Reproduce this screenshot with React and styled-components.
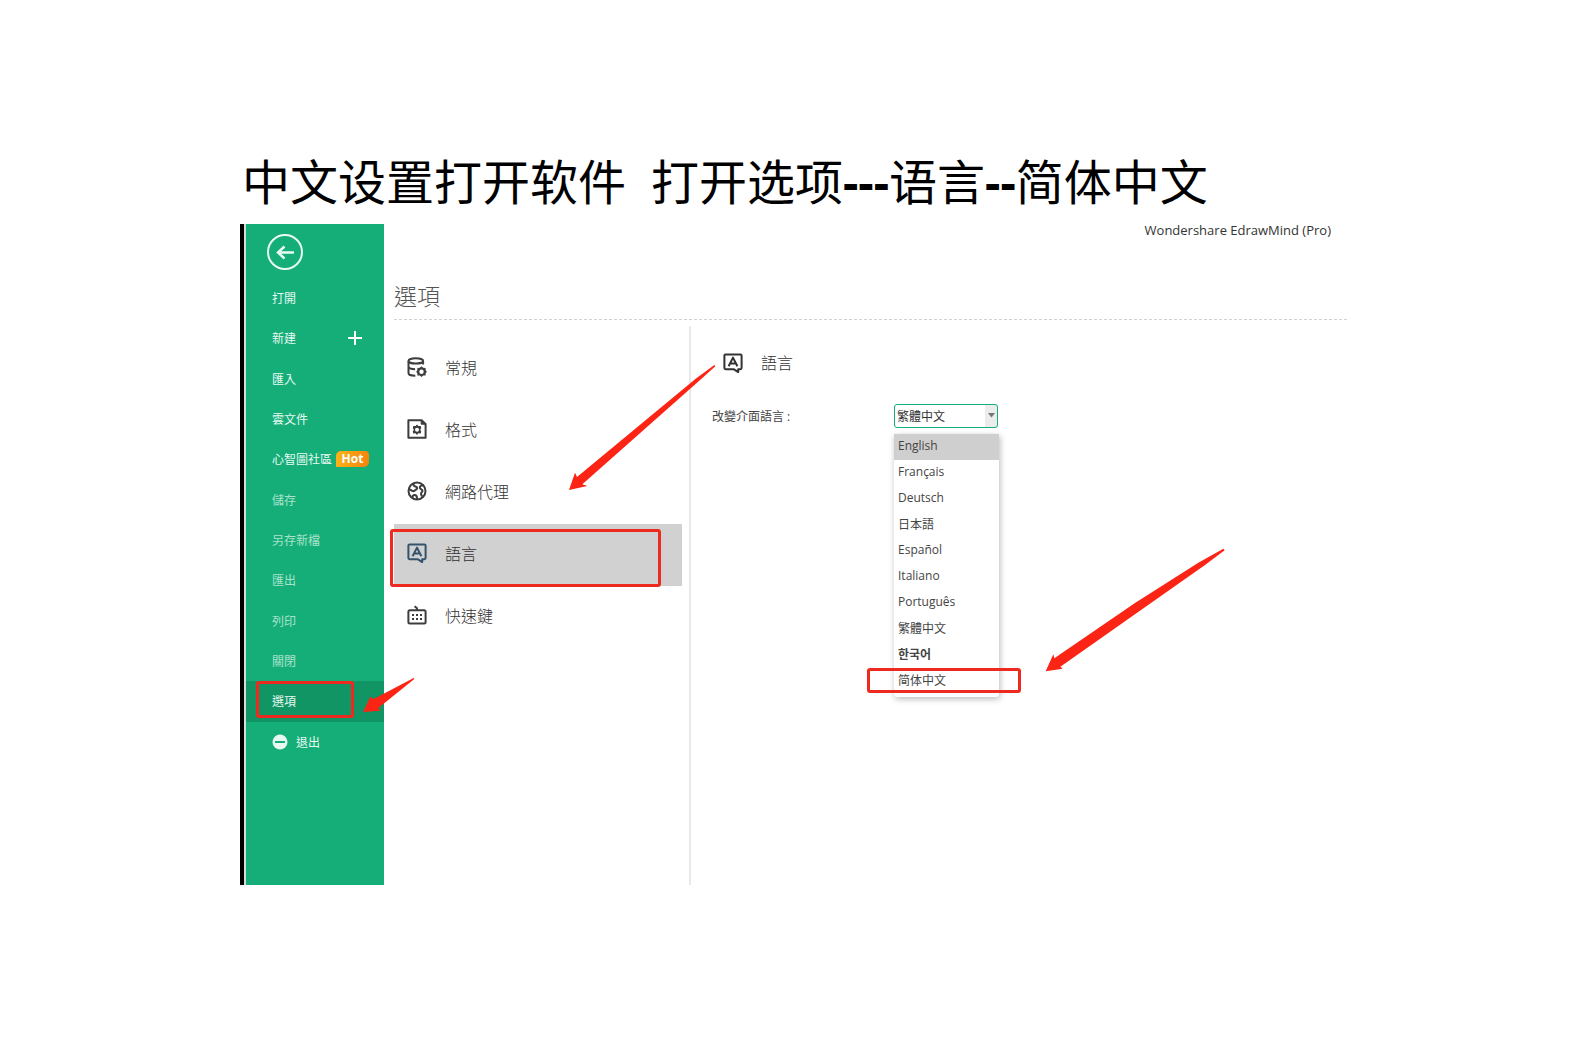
import React, { useState } from "react";
import styled, { createGlobalStyle } from "styled-components";

const GlobalStyle = createGlobalStyle`
  * {
    box-sizing: border-box;
  }
  body {
    margin: 0;
    background: #fff;
    color: #444;
    font-family: "Open Sans", "Noto Sans CJK TC", sans-serif;
    font-size: 12px;
  }
  button {
    font: inherit;
    color: inherit;
    background: none;
    border: none;
    padding: 0;
    text-align: left;
    cursor: pointer;
  }
`;

const Page = styled.main`
  max-width: 1107px;
  margin: 0 auto;
  padding: 150px 0 160px;
`;

const Title = styled.h1`
  margin: 0 0 10px;
  padding-left: 2px;
  color: #000;
  font-family: "Noto Sans", "Noto Sans CJK SC", sans-serif;
  font-size: 48px;
  font-weight: 400;
  line-height: 64px;
  white-space: pre;

  b {
    font-weight: 700;
  }
`;

const Window = styled.section`
  display: flex;
  min-height: 661px;
  border-left: 4px solid #000;
`;

const Sidebar = styled.aside`
  flex: 0 0 140px;
  padding-top: 10px;
  background: #15ae79;
  border-left: 2px solid #d5dcd9;
`;

const BackButton = styled.button`
  display: block;
  width: 36px;
  height: 36px;
  margin: 0 0 8px 21px;

  svg {
    display: block;
  }
`;

const Menu = styled.nav`
  display: flex;
  flex-direction: column;
  height: 484px;
`;

const MenuItem = styled.button`
  flex: 1;
  display: flex;
  align-items: center;
  position: relative;
  padding-left: 26px;
  color: ${(props) => (props.$dim ? "#a9e2cb" : "#e6f8f1")};
  background: ${(props) => (props.$active ? "#129565" : "transparent")};

  .plus {
    margin-left: auto;
    margin-right: 21px;
  }
  .exit {
    margin-right: 8px;
  }
`;

const HotBadge = styled.span`
  width: 33px;
  height: 16px;
  margin-left: 4px;
  border-radius: 5px 4px 5px 1px;
  background: linear-gradient(100deg, #fbb418, #f5820c);
  color: #fff;
  font-weight: 700;
  line-height: 16px;
  text-align: center;
`;

const Content = styled.div`
  flex: 1;
  min-width: 0;
  display: flex;
  flex-direction: column;
  padding-left: 10px;
`;

const AppName = styled.div`
  padding-right: 16px;
  color: #333;
  font-size: 13px;
  line-height: 12px;
  text-align: right;
`;

const Heading = styled.h2`
  margin: 41px 0 0;
  padding-bottom: 4px;
  border-bottom: 1px dashed #d2d2d2;
  color: #555;
  font-size: 23px;
  font-weight: 300;
  line-height: 38px;
`;

const Columns = styled.div`
  flex: 1;
  display: flex;
  padding-top: 6px;
`;

const Categories = styled.div`
  flex: 0 0 297px;
  display: flex;
  flex-direction: column;
  padding: 12px 7px 0 0;
  border-right: 2px solid #e9e9e9;
`;

const Category = styled.button`
  display: flex;
  align-items: center;
  gap: 18px;
  position: relative;
  height: 62px;
  padding: 0 0 5px 13px;
  font-size: 16px;
  font-weight: 300;
  color: #333;
  background: ${(props) => (props.$active ? "#d1d1d1" : "transparent")};

  svg {
    color: ${(props) => (props.$active ? "#34536c" : "#3d3d3d")};
  }
`;

const Detail = styled.div`
  flex: 1;
  position: relative;
  padding: 24px 0 0 21px;
`;

const DetailTitle = styled.h3`
  display: flex;
  align-items: center;
  gap: 18px;
  margin: 0 0 28px;
  padding-left: 11px;
  color: #333;
  font-size: 16px;
  font-weight: 300;
  line-height: 26px;
`;

const Field = styled.div`
  display: flex;
  align-items: center;

  label {
    width: 182px;
    color: #444;
  }
`;

const SelectBox = styled.div`
  position: relative;
  width: 104px;

  select {
    display: block;
    width: 100%;
    height: 24px;
    padding: 0 12px 0 2px;
    appearance: none;
    border: 1px solid #15ae79;
    border-radius: 3px;
    outline: none;
    background: linear-gradient(to left, #ececec 12px, #fff 12px);
    color: #333;
    font: inherit;
  }
  .caret {
    position: absolute;
    top: 9px;
    right: 3px;
    pointer-events: none;
  }
`;

const Options = styled.div`
  position: absolute;
  top: 30px;
  left: 0;
  display: flex;
  flex-direction: column;
  width: 105px;
  padding-bottom: 3px;
  border-radius: 0 0 3px 3px;
  background: #fff;
  box-shadow: 1px 2px 6px rgba(0, 0, 0, 0.28);
`;

const Option = styled.button`
  position: relative;
  height: 26px;
  padding: 0 0 3px 4px;
  color: #444;
  font-family: "Open Sans", ${(props) => props.$cjk || '"Noto Sans CJK TC"'},
    sans-serif;
  font-weight: ${(props) => (props.$bold ? 700 : 400)};
  background: ${(props) => (props.$active ? "#cfcfcf" : "transparent")};
`;

const Marker = styled.span`
  position: absolute;
  top: ${(props) => props.$top}px;
  left: ${(props) => props.$left}px;
  width: ${(props) => props.$width}px;
  height: ${(props) => props.$height}px;
  border: 3px solid #ee2a20;
  border-radius: 3px;
  pointer-events: none;
  z-index: 2;
`;

const ArrowStyled = styled.svg`
  position: absolute;
  top: ${(props) => props.$top}px;
  left: ${(props) => props.$left}px;
  fill: #fb2415;
  pointer-events: none;
  z-index: 3;
`;

function Arrow({ width, height, top, left, points }) {
  return (
    <ArrowStyled
      width={width}
      height={height}
      viewBox={`0 0 ${width * 3} ${height * 3}`}
      $top={top}
      $left={left}
      aria-hidden="true"
    >
      <polygon points={points} />
    </ArrowStyled>
  );
}

function Icon({ children }) {
  return (
    <svg
      width="20"
      height="20"
      viewBox="0 0 20 20"
      fill="none"
      stroke="currentColor"
      strokeWidth="2"
      strokeLinejoin="round"
      aria-hidden="true"
    >
      {children}
    </svg>
  );
}

const gear =
  "M14.5 9.2l1.7 1.6 2.4.1.1 2.300 1.200 1.500-1.200 1.500-.1 2.200-2.400.1-1.700 1.500-1.700-1.500-2.400-.1-.1-2.200-1.100-1.500 1.100-1.500.1-2.300 2.400-.1z";

const GeneralIcon = () => (
  <Icon>
    <ellipse cx="8.8" cy="3.9" rx="7.3" ry="2.6" />
    <path d="M1.5 4v12.2c0 1.4 3 2.5 6.800 2.500M16.100 4v3.600M1.500 10c.6 1.300 3.200 2.200 6.600 2.200" />
    <path d={gear} fill="currentColor" stroke="none" />
    <circle cx="14.5" cy="14.7" r="2.2" fill="#fff" stroke="none" />
  </Icon>
);

const FormatIcon = () => (
  <Icon>
    <path d="M1.4 1.2h13.2l4 3.8v13.8H1.4z" />
    <path d="M14.2 1.4v3.8h4.2z" fill="currentColor" strokeWidth="1" />
    <path
      d="M10 5.4l1.400 1.700 2.300-.2.500 2-1 1.800 1 1.800-.5 1.900-2.300-.1L10 16l-1.400-1.700-2.300.1-.5-1.900 1-1.800-1-1.800.5-2 2.300.2z"
      fill="currentColor"
      stroke="none"
    />
    <circle cx="10" cy="10.7" r="2" fill="#fff" stroke="none" />
  </Icon>
);

const ProxyIcon = () => (
  <Icon>
    <circle cx="10" cy="10" r="8.5" />
    <path d="M6.200 2.400c.2 2.200 1 3.200 2.800 3.300 1.500.2 1.700 2.200.2 2.800-1.600.8-1.800 1.900-3.300 1.600-1.700-.4-2.400-1.700-4.200-1.900M16.200 4.200c-2.400.1-3.800 1.300-3.200 3 .5 1.400 2.300.9 2.500 2.400.2 1.600-2 1.800-1.500 3.700.2.900.9 1.500 1.300 2.200M5.600 17.400c-.4-2 .2-3.300 1.700-3.500 1.900-.2 2.700 1.300 2.800 4.300" />
  </Icon>
);

const LanguageIcon = () => (
  <Icon>
    <path d="M2.500 1.400h15a1.100 1.100 0 0 1 1.100 1.100v12.600a1.100 1.100 0 0 1-1.100 1.100h-2.300v2.900l-4.600-2.900H2.500a1.100 1.100 0 0 1-1.100-1.100V2.500a1.100 1.100 0 0 1 1.100-1.100z" />
    <path d="M5.600 13.200L10 4.600l4.400 8.600M7.300 10.600h5.400" />
  </Icon>
);

const ShortcutIcon = () => (
  <Icon>
    <rect x="1.400" y="5.200" width="17.200" height="13.400" rx="1.500" />
    <path d="M10 5V3.200L7.600 1.200" />
    <path d="M5 9.900h2M9 9.900h2M13 9.900h2M5 14h2M9 14h2M13 14h2" />
  </Icon>
);

const menuItems = [
  { text: "打開" },
  { text: "新建", plus: true },
  { text: "匯入" },
  { text: "雲文件" },
  { text: "心智圖社區", hot: true },
  { text: "儲存", dim: true },
  { text: "另存新檔", dim: true },
  { text: "匯出", dim: true },
  { text: "列印", dim: true },
  { text: "關閉", dim: true },
  { text: "選項", active: true },
  { text: "退出", exit: true },
];

const categories = [
  { text: "常規", icon: GeneralIcon },
  { text: "格式", icon: FormatIcon },
  { text: "網路代理", icon: ProxyIcon },
  { text: "語言", icon: LanguageIcon },
  { text: "快速鍵", icon: ShortcutIcon },
];

const languages = [
  { text: "English" },
  { text: "Français" },
  { text: "Deutsch" },
  { text: "日本語", cjk: '"Noto Sans CJK JP"' },
  { text: "Español" },
  { text: "Italiano" },
  { text: "Português" },
  { text: "繁體中文" },
  { text: "한국어", cjk: '"Noto Sans CJK KR"', bold: true },
  { text: "简体中文", cjk: '"Noto Sans CJK SC"', marked: true },
];

function LanguageSelect() {
  const [language, setLanguage] = useState("繁體中文");
  const [hovered, setHovered] = useState("English");

  return (
    <SelectBox>
      <select
        id="language"
        value={language}
        onChange={(e) => setLanguage(e.target.value)}
      >
        {languages.map(({ text }) => (
          <option key={text}>{text}</option>
        ))}
      </select>
      <svg className="caret" width="7" height="5" viewBox="0 0 7 5">
        <path d="M0 0h7L3.500 4.500z" fill="#777" />
      </svg>
      <Options role="listbox" aria-label="改變介面語言">
        {languages.map(({ text, cjk, bold, marked }) => (
          <Option
            key={text}
            role="option"
            aria-selected={text === language}
            $cjk={cjk}
            $bold={bold}
            $active={text === hovered}
            onMouseEnter={() => setHovered(text)}
            onClick={() => setLanguage(text)}
          >
            {text}
            {marked && <Marker $top={0} $left={-27} $width={154} $height={25} />}
          </Option>
        ))}
      </Options>
      <Arrow
        width={182}
        height={126}
        top={144}
        left={151}
        points="535,2 539,7 480,51 46,356 53,362 2,370 25,319 28,331 270,165 460,44"
      />
    </SelectBox>
  );
}

export default function App() {
  const [category, setCategory] = useState("語言");

  return (
    <>
      <GlobalStyle />
      <Page>
        <Title>
          中文设置打开软件{"  "}打开选项<b>---</b>语言<b>--</b>简体中文
        </Title>
        <Window>
          <Sidebar>
            <BackButton aria-label="返回">
              <svg
                width="36"
                height="36"
                viewBox="0 0 36 36"
                fill="none"
                stroke="#eafaf4"
                strokeWidth="2"
              >
                <circle cx="18" cy="18" r="17" />
                <path
                  d="M27 18.500H11M17.500 12.500l-6.500 6 6.500 6"
                  strokeWidth="2.500"
                />
              </svg>
            </BackButton>
            <Menu>
              {menuItems.map((item) => (
                <MenuItem
                  key={item.text}
                  $dim={item.dim}
                  $active={item.active}
                >
                  {item.exit && (
                    <svg className="exit" width="16" height="16">
                      <circle cx="8" cy="8" r="7.500" fill="#e6f8f1" />
                      <path d="M3 8h10" stroke="#15ae79" strokeWidth="2" />
                    </svg>
                  )}
                  <span>{item.text}</span>
                  {item.plus && (
                    <svg className="plus" width="16" height="16">
                      <path
                        d="M8 1v14M1 8h14"
                        stroke="#fff"
                        strokeWidth="2"
                      />
                    </svg>
                  )}
                  {item.hot && <HotBadge>Hot</HotBadge>}
                  {item.active && (
                    <>
                      <Marker $top={0} $left={10} $width={98} $height={37} />
                      <Arrow
                        width={53}
                        height={36}
                        top={-4}
                        left={117}
                        points="152,3 154,6 46,93 51,101 0,105 22,59 32,66"
                      />
                    </>
                  )}
                </MenuItem>
              ))}
            </Menu>
          </Sidebar>
          <Content>
            <AppName>Wondershare EdrawMind (Pro)</AppName>
            <Heading>選項</Heading>
            <Columns>
              <Categories>
                {categories.map(({ text, icon: CategoryIcon }) => (
                  <Category
                    key={text}
                    $active={text === category}
                    onClick={() => setCategory(text)}
                  >
                    <CategoryIcon />
                    <span>{text}</span>
                    {text === "語言" && (
                      <Marker $top={5} $left={-4} $width={271} $height={58} />
                    )}
                  </Category>
                ))}
              </Categories>
              <Detail>
                <DetailTitle>
                  <LanguageIcon />
                  <span>語言</span>
                </DetailTitle>
                <Field>
                  <label htmlFor="language">改變介面語言 :</label>
                  <LanguageSelect />
                </Field>
                <Arrow
                  width={148}
                  height={128}
                  top={38}
                  left={-122}
                  points="436,3 439,7 400,42 40,361 55,366 0,378 18,326 24,339 380,44"
                />
              </Detail>
            </Columns>
          </Content>
        </Window>
      </Page>
    </>
  );
}
